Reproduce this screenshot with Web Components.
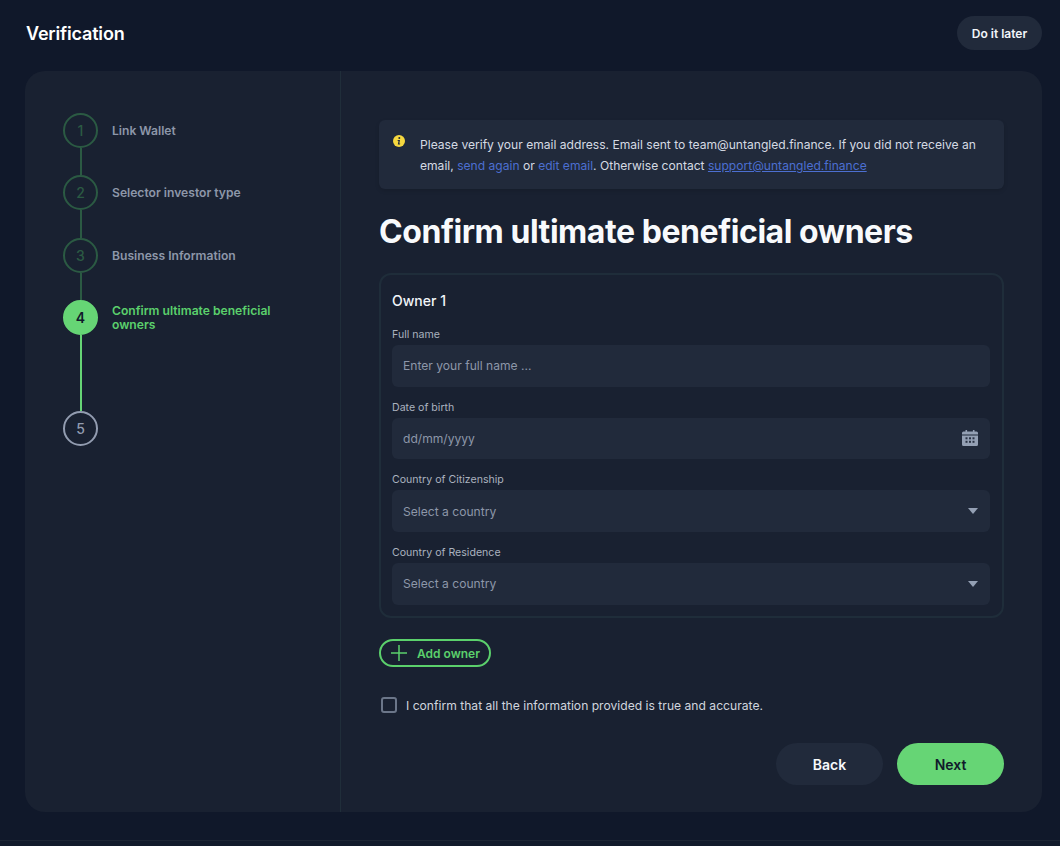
<!DOCTYPE html>
<html lang="en">
<head>
<meta charset="utf-8">
<title>Verification</title>
<style>
  html, body { margin: 0; height: 100%; }
  body {
    background: #10182a;
    font-family: Inter, "Liberation Sans", sans-serif;
    color: #fff;
    overflow: hidden;
  }
</style>
</head>
<body>
<verify-page>
  <page-header slot="header" title="Verification"></page-header>
  <step-list slot="steps">
    <step-item num="1" state="done" gap="27">Link Wallet</step-item>
    <step-item num="2" state="done" gap="28">Selector investor type</step-item>
    <step-item num="3" state="done" gap="27">Business Information</step-item>
    <step-item num="4" state="active" gap="76">Confirm ultimate beneficial owners</step-item>
    <step-item num="5" state="todo"></step-item>
  </step-list>
  <info-alert slot="alert">Please verify your email address. Email sent to team@untangled.finance. If you did not receive an<br>email, <a href="#">send again</a> or <a href="#">edit email</a>. Otherwise contact <a href="#" class="u">support@untangled.finance</a></info-alert>
  <owner-card heading="Owner 1">
    <form-field label="Full name" hint="Enter your full name ..."></form-field>
    <form-field label="Date of birth" hint="dd/mm/yyyy" icon="calendar"></form-field>
    <form-field label="Country of Citizenship" hint="Select a country" icon="caret"></form-field>
    <form-field label="Country of Residence" hint="Select a country" icon="caret"></form-field>
  </owner-card>
  <add-button>Add owner</add-button>
  <confirm-check>I confirm that all the information provided is true and accurate.</confirm-check>
  <pill-button slot="actions">Back</pill-button>
  <pill-button slot="actions" kind="primary">Next</pill-button>
</verify-page>

<script>
// small helper so every element sets up its shadow root the same way
function shadow(el, html) {
  el.attachShadow({mode: 'open'});
  el.shadowRoot.innerHTML = html;
}

const icons = {
  calendar: `<svg width="16" height="16" viewBox="0 0 16 16"><path fill="#94a0b4" d="M3.500 0h1.600v1.400h5.800V0h1.600v1.400h2A1.500 1.500 0 0 1 16 2.900v1.700H0V2.900a1.500 1.500 0 0 1 1.500-1.500h2zM0 5.600h16v8.900a1.500 1.500 0 0 1-1.500 1.500h-13A1.500 1.500 0 0 1 0 14.500z"/><g fill="#2a3345"><rect x="3.500" y="7.300" width="2" height="2"/><rect x="7" y="7.300" width="2" height="2"/><rect x="10.500" y="7.300" width="2" height="2"/><rect x="3.500" y="10.800" width="2" height="2"/><rect x="7" y="10.800" width="2" height="2"/><rect x="10.500" y="10.800" width="2" height="2"/></g></svg>`,
  caret: `<svg width="10" height="6" viewBox="0 0 10 6"><path fill="#94a0b4" d="M0 0h10L5 6z"/></svg>`
};

class VerifyPage extends HTMLElement {
  constructor() {
    super();
    shadow(this, `
      <style>
        :host { display: flex; flex-direction: column; height: 846px; box-sizing: border-box; padding: 16px 18px 0 25px; }
        .card { display: grid; grid-template-columns: 316px 1fr; width: 1017px; height: 741px; margin-top: 21px; background: #192131; border-radius: 20px; }
        .side { padding: 42px 0 0 38px; border-right: 1px solid #202e3a; }
        .main { padding: 49px 38px 0 38px; display: flex; flex-direction: column; align-items: stretch; }
        h1 { margin: 23px 0 21px; font-size: 32px; line-height: 40px; font-weight: 700; letter-spacing: -0.44px; color: #f8fafc; }
        .actions { display: flex; justify-content: flex-end; gap: 14px; margin-top: 30px; }
        .foot { margin: 28px -18px 0 -25px; border-top: 1px solid #1c2534; height: 5px; background: #111a2b; }
      </style>
      <slot name="header"></slot>
      <div class="card">
        <div class="side"><slot name="steps"></slot></div>
        <div class="main">
          <slot name="alert"></slot>
          <h1>Confirm ultimate beneficial owners</h1>
          <slot></slot>
          <div class="actions"><slot name="actions"></slot></div>
        </div>
      </div>
      <div class="foot"></div>
    `);
  }
}

class PageHeader extends HTMLElement {
  constructor() {
    super();
    shadow(this, `
      <style>
        :host { display: flex; align-items: center; justify-content: space-between; height: 34px; }
        h2 { margin: 0 0 0 1px; padding-top: 1px; font-size: 18px; line-height: 34px; font-weight: 600; letter-spacing: -0.17px; color: #fff; }
        button { font: 600 12px/34px Inter, sans-serif; height: 34px; width: 85px; padding: 1px 0 0; border: 0; border-radius: 17px; background: #212a3b; color: #f1f5f9; }
      </style>
      <h2>${this.getAttribute('title')}</h2>
      <button>Do it later</button>
    `);
  }
}

class StepList extends HTMLElement {
  constructor() {
    super();
    shadow(this, `<style>:host { display: flex; flex-direction: column; }</style><slot></slot>`);
  }
}

class StepItem extends HTMLElement {
  constructor() {
    super();
    const state = this.getAttribute('state');
    const gap = this.getAttribute('gap') || 0;
    const c = {
      done: {ring: '#2b5a43', fill: 'transparent', num: '#2b5a43', text: '#8d97a9', line: '#2b5a43', weight: 500},
      active: {ring: '#66d575', fill: '#66d575', num: '#111a2b', text: '#5bd06c', line: '#66d575', weight: 600},
      todo: {ring: '#929cb0', fill: 'transparent', num: '#929cb0', text: '#929cb0', line: 'transparent', weight: 500}
    }[state];
    shadow(this, `
      <style>
        :host { display: grid; grid-template-columns: 35px 186px; column-gap: 14px; align-items: start; }
        .rail { display: flex; flex-direction: column; align-items: center; }
        .dot { box-sizing: border-box; width: 35px; height: 35px; border-radius: 50%; border: 2px solid ${c.ring}; background: ${c.fill}; color: ${c.num}; font-size: 14px; font-weight: ${c.weight}; display: flex; align-items: center; justify-content: center; }
        .line { width: 2px; height: ${gap}px; background: ${c.line}; }
        .label { font-size: 12.12px; line-height: 14px; font-weight: 600; color: ${c.text}; height: 35px; display: flex; align-items: center; }
        .active { margin-top: 4px; align-items: flex-start; }
      </style>
      <div class="rail"><div class="dot">${this.getAttribute('num')}</div><div class="line"></div></div>
      <div class="label ${state === 'active' ? 'active' : ''}"><span><slot></slot></span></div>
    `);
  }
}

class InfoAlert extends HTMLElement {
  constructor() {
    super();
    shadow(this, `
      <style>
        :host { display: flex; box-sizing: border-box; height: 69px; padding: 14px 14px 0 14px; gap: 15px; background: #212a3b; border-radius: 6px; box-shadow: 0 2px 4px rgba(0,0,0,.12); font-size: 12.09px; line-height: 21px; color: #d5dae3; }
        svg { flex: none; margin-top: 1px; }
        ::slotted(a) { color: #4c6fd1; text-decoration: none; }
        ::slotted(a.u) { text-decoration: underline; }
      </style>
      <svg width="12" height="12" viewBox="0 0 12 12"><circle cx="6" cy="6" r="6" fill="#f6d83f"/><circle cx="6.300" cy="3.100" r="1" fill="#212a3b"/><path fill="#212a3b" d="M4.700 5h2.300L6.300 8.500h.9L7 9.500H4.800L5.500 6h-.9z"/></svg>
      <div><slot></slot></div>
    `);
  }
}

class OwnerCard extends HTMLElement {
  constructor() {
    super();
    shadow(this, `
      <style>
        :host { display: flex; flex-direction: column; box-sizing: border-box; height: 345px; padding: 17px 12px 0 11px; border: 2px solid #1f2d3a; border-radius: 12px; }
        h3 { margin: 0 0 18px; font-size: 14px; line-height: 18px; font-weight: 500; color: #f1f5f9; }
        .fields { display: flex; flex-direction: column; gap: 14px; }
      </style>
      <h3>${this.getAttribute('heading')}</h3>
      <div class="fields"><slot></slot></div>
    `);
  }
}

class FormField extends HTMLElement {
  constructor() {
    super();
    const icon = icons[this.getAttribute('icon')] || '';
    shadow(this, `
      <style>
        :host { display: flex; flex-direction: column; gap: 3px; }
        label { font-size: 10.6px; line-height: 14px; color: #aab2bf; }
        .box { display: flex; align-items: center; justify-content: space-between; box-sizing: border-box; height: 41.67px; padding: 0 12px 0 11px; background: #212a3b; border-radius: 6px; font-size: 12.1px; color: #8d97a9; }
      </style>
      <label>${this.getAttribute('label')}</label>
      <div class="box"><span>${this.getAttribute('hint')}</span>${icon}</div>
    `);
  }
}

class AddButton extends HTMLElement {
  constructor() {
    super();
    shadow(this, `
      <style>
        :host { display: inline-flex; align-self: flex-start; align-items: center; gap: 10px; box-sizing: border-box; height: 28px; width: 112px; margin-top: 21px; padding-left: 10px; border: 2px solid #5bd06c; border-radius: 14px; color: #5bd06c; font-size: 12px; font-weight: 600; }
        svg { flex: none; }
      </style>
      <svg width="16" height="16" viewBox="0 0 16 16"><path d="M8 0v16M0 8h16" stroke="#5bd06c" stroke-width="1.500" fill="none"/></svg>
      <span><slot></slot></span>
    `);
  }
}

class ConfirmCheck extends HTMLElement {
  constructor() {
    super();
    shadow(this, `
      <style>
        :host { display: flex; align-items: center; gap: 9px; margin-top: 30px; margin-left: 2px; font-size: 12.13px; line-height: 16px; color: #d0d5de; }
        i { display: block; box-sizing: border-box; width: 16px; height: 16px; border: 2px solid #6b7689; border-radius: 3px; }
        span { position: relative; top: 1px; }
      </style>
      <i></i><span><slot></slot></span>
    `);
  }
}

class PillButton extends HTMLElement {
  constructor() {
    super();
    const primary = this.getAttribute('kind') === 'primary';
    shadow(this, `
      <style>
        :host { display: flex; align-items: center; justify-content: center; width: 107px; height: 42px; border-radius: 21px; background: ${primary ? '#66d575' : '#212a3b'}; color: ${primary ? '#111a2b' : '#f8fafc'}; font-size: 14px; font-weight: 600; }
      </style>
      <slot></slot>
    `);
  }
}

customElements.define('page-header', PageHeader);
customElements.define('step-list', StepList);
customElements.define('step-item', StepItem);
customElements.define('info-alert', InfoAlert);
customElements.define('owner-card', OwnerCard);
customElements.define('form-field', FormField);
customElements.define('add-button', AddButton);
customElements.define('confirm-check', ConfirmCheck);
customElements.define('pill-button', PillButton);
customElements.define('verify-page', VerifyPage);
</script>
</body>
</html>
